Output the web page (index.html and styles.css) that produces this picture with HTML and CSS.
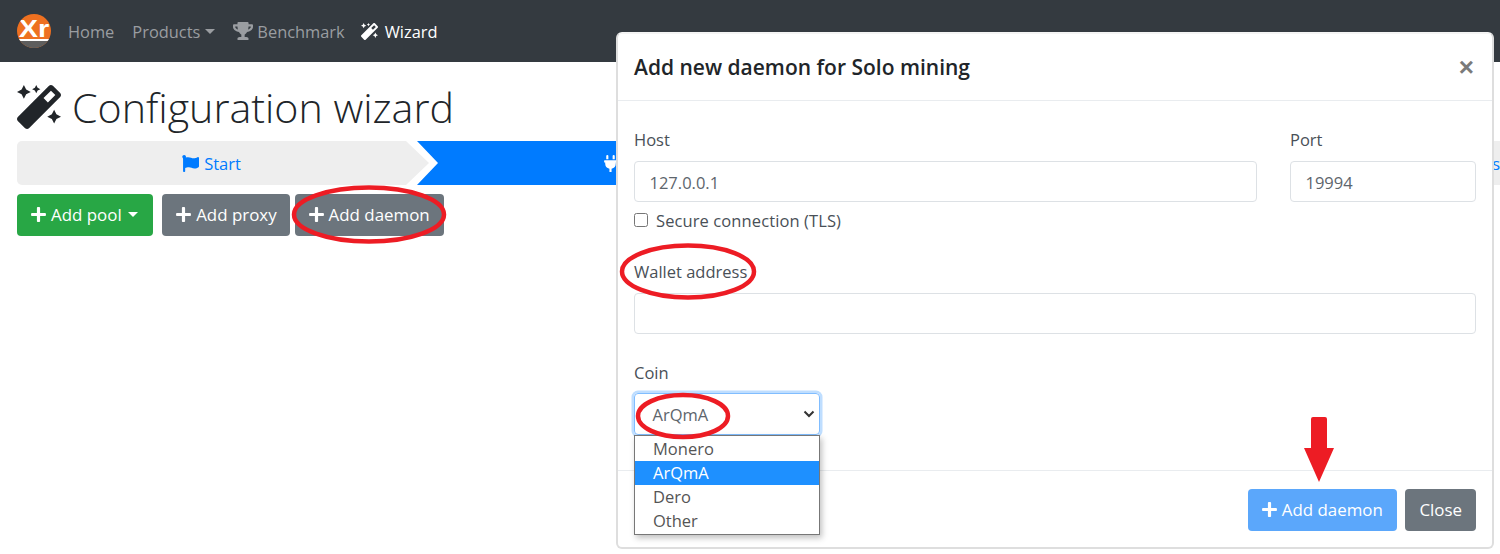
FILE: index.html
```html
<!DOCTYPE html>
<html lang="en">
<head>
<meta charset="utf-8">
<title>Configuration wizard</title>
<link rel="stylesheet" href="styles.css">
</head>
<body>
<svg class="defs" width="0" height="0" aria-hidden="true">
  <symbol id="i-wand" viewBox="0 0 512 512"><path d="M224 96l16-32 32-16-32-16-16-32-16 32-32 16 32 16 16 32zM80 160l26.66-53.33L160 80l-53.34-26.67L80 0 53.34 53.33 0 80l53.34 26.67L80 160zm352 128l-26.66 53.33L352 368l53.34 26.67L432 448l26.66-53.33L512 368l-53.34-26.67L432 288zm70.62-193.77L417.77 9.38C411.53 3.12 403.34 0 395.15 0c-8.19 0-16.38 3.12-22.63 9.38L9.38 372.52c-12.5 12.5-12.5 32.76 0 45.25l84.85 84.85c6.25 6.25 14.44 9.37 22.62 9.37 8.19 0 16.38-3.12 22.63-9.37l363.14-363.15c12.5-12.49 12.5-32.75 0-45.24zM359.45 203.46l-50.91-50.91 86.6-86.6 50.91 50.91-86.6 86.6z"/></symbol>
  <symbol id="i-plus" viewBox="0 0 448 512"><path d="M416 208H272V64c0-17.67-14.33-32-32-32h-32c-17.67 0-32 14.33-32 32v144H32c-17.67 0-32 14.33-32 32v32c0 17.67 14.33 32 32 32h144v144c0 17.67 14.33 32 32 32h32c17.67 0 32-14.33 32-32V304h144c17.67 0 32-14.33 32-32v-32c0-17.67-14.33-32-32-32z"/></symbol>
</svg>
<div class="page">
  <nav class="navbar">
    <span class="logo"><span class="logo-band"></span><span class="logo-text">Xr</span></span>
    <a class="nav-link">Home</a>
    <a class="nav-link">Products<span class="caret"></span></a>
    <a class="nav-link"><svg class="nav-icon trophy" viewBox="0 0 576 512"><path d="M552 64H448V24c0-13.3-10.7-24-24-24H152c-13.3 0-24 10.7-24 24v40H24C10.7 64 0 74.7 0 88v56c0 35.7 22.5 72.4 61.9 100.7 31.5 22.7 69.8 37.1 110 41.7C203.3 338.5 240 360 240 360v72h-48c-35.3 0-64 20.7-64 56v12c0 6.6 5.4 12 12 12h296c6.6 0 12-5.4 12-12v-12c0-35.3-28.7-56-64-56h-48v-72s36.7-21.5 68.1-73.6c40.3-4.6 78.6-19 110-41.7 39.3-28.3 61.9-65 61.9-100.7V88c0-13.3-10.7-24-24-24zM99.3 192.8C74.9 175.2 64 155.6 64 144v-16h64.2c1 32.6 5.8 61.2 12.8 86.2-15.1-5.2-29.2-12.4-41.7-21.4zM512 144c0 16.1-17.7 36.1-35.3 48.8-12.5 9-26.7 16.2-41.8 21.4 7-25 11.8-53.6 12.8-86.2H512v16z"/></svg>Benchmark</a>
    <a class="nav-link active"><svg class="nav-icon wand-sm"><use href="#i-wand"/></svg>Wizard</a>
  </nav>
  <main class="content">
    <h1 class="title"><svg class="title-icon"><use href="#i-wand"/></svg>Configuration wizard</h1>
    <div class="steps">
      <div class="step step-first"><svg class="step-icon" viewBox="0 0 512 512"><path d="M349.565 98.783C295.978 98.783 251.721 64 184.348 64c-24.955 0-47.309 4.384-68.045 12.013a55.947 55.947 0 0 0 3.586-23.562C118.117 24.015 94.806 1.206 66.338.048 34.345-1.254 8 24.296 8 56c0 19.026 9.497 35.825 24 45.945V488c0 13.255 10.745 24 24 24h16c13.255 0 24-10.745 24-24v-94.4c28.311-12.064 63.582-22.122 114.435-22.122 53.588 0 97.844 34.783 165.217 34.783 48.169 0 86.667-16.294 122.505-40.858C506.84 359.452 512 349.571 512 339.045v-243.1c0-23.393-24.269-38.87-45.485-29.016-34.338 15.948-76.454 31.854-116.95 31.854z"/></svg>Start</div>
      <div class="step step-active"><svg class="step-icon" viewBox="0 0 384 512"><path d="M320,32a32,32,0,0,0-64,0v96h64Zm48,128H16A16,16,0,0,0,0,176v32a16,16,0,0,0,16,16H32v32A160.07,160.07,0,0,0,160,412.8V512h64V412.8A160.07,160.07,0,0,0,352,256V224h16a16,16,0,0,0,16-16V176A16,16,0,0,0,368,160ZM128,32a32,32,0,0,0-64,0v96h64Z"/></svg>Connection</div>
      <div class="step step-last">Pools</div>
    </div>
    <div class="actions">
      <button class="btn btn-green"><svg class="plus"><use href="#i-plus"/></svg>Add pool<span class="caret"></span></button>
      <button class="btn btn-gray btn-proxy"><svg class="plus"><use href="#i-plus"/></svg>Add proxy</button>
      <button class="btn btn-gray"><svg class="plus"><use href="#i-plus"/></svg>Add daemon</button>
    </div>
  </main>

  <section class="modal">
    <header class="modal-header">
      <h2 class="modal-title">Add new daemon for Solo mining</h2>
      <span class="modal-close">×</span>
    </header>
    <div class="modal-body">
      <div class="host-row">
        <div class="field">
          <label class="label">Host</label>
          <input class="input" value="127.0.0.1">
        </div>
        <div class="field">
          <label class="label">Port</label>
          <input class="input" value="19994">
        </div>
      </div>
      <label class="check-row"><input type="checkbox" class="check">Secure connection (TLS)</label>
      <div class="field wallet">
        <label class="label">Wallet address</label>
        <input class="input">
      </div>
      <div class="field coin">
        <label class="label">Coin</label>
        <div class="select">ArQmA<svg class="chevron" viewBox="0 0 12 8"><path d="M1.5 1.5 6 6l4.5-4.5" fill="none" stroke="#333" stroke-width="2"/></svg></div>
      </div>
    </div>
    <footer class="modal-footer">
      <button class="btn btn-blue"><svg class="plus"><use href="#i-plus"/></svg>Add daemon</button>
      <button class="btn btn-gray">Close</button>
    </footer>
    <ul class="dropdown">
      <li class="opt">Monero</li>
      <li class="opt opt-on">ArQmA</li>
      <li class="opt">Dero</li>
      <li class="opt">Other</li>
    </ul>
  </section>

  <svg class="marks" viewBox="0 0 1500 554" aria-hidden="true">
    <ellipse cx="369" cy="214.500" rx="75" ry="27" />
    <ellipse cx="688" cy="271.500" rx="66" ry="26" />
    <ellipse cx="683" cy="416" rx="45" ry="21" />
    <path class="arrow" d="M1313 417h12q2 0 2 2v29h7l-15 34-15-34h7v-29q0-2 2-2z"/>
  </svg>
</div>
</body>
</html>
```
FILE: styles.css
```css
* { box-sizing: border-box; }
html, body { margin: 0; padding: 0; }
body {
  font-family: "Open Sans", "Noto Sans", sans-serif;
  font-size: 16.5px;
  color: #495057;
  background: #fff;
}
.defs { position: absolute; }
.page {
  position: relative;
  width: 1500px;
  height: 554px;
  overflow: hidden;
}
.navbar {
  height: 62px;
  background: #343a40;
  display: flex;
  align-items: center;
  padding-left: 17px;
  gap: 18px;
  font-size: 16.400px;
}
.logo {
  position: relative;
  width: 34px;
  height: 34px;
  margin-right: -1px;
  border-radius: 50%;
  background: #ee7020;
  overflow: hidden;
  flex: none;
}
.logo-band {
  position: absolute;
  left: 0; right: 0; bottom: 0;
  height: 9px;
  background: #5e5e5e;
  border-top: 2px solid #fff;
}
.logo-text {
  position: absolute;
  left: 0; right: 0;
  top: 1px;
  text-align: center;
  font-family: "Liberation Sans", sans-serif;
  font-weight: 700;
  font-size: 24px;
  line-height: 28px;
  transform: scaleX(1.2);
  color: #fff;
}
.nav-link {
  display: flex;
  align-items: center;
  color: #9a9da1;
  white-space: nowrap;
}
.nav-link.active { color: #fff; margin-left: -2px; }
.nav-icon { fill: currentColor; flex: none; margin-right: 4px; }
.trophy { width: 20px; height: 18px; }
.wand-sm { width: 17px; height: 17px; margin-right: 7px; }
.caret {
  display: inline-block;
  margin-left: 5px;
  border-top: 5px solid currentColor;
  border-left: 5px solid transparent;
  border-right: 5px solid transparent;
}
.content { padding: 0 0 0 17px; }
.title {
  margin: 19px 0 8px;
  height: 52px;
  display: flex;
  align-items: center;
  font-weight: 300;
  font-size: 41.200px;
  color: #212529;
  white-space: nowrap;
}
.title-icon { width: 44px; height: 44px; fill: #212529; margin-right: 11px; flex: none; }
.steps {
  display: flex;
  height: 44px;
  width: 1483px;
}
.step {
  display: flex;
  align-items: center;
  justify-content: center;
  height: 44px;
  white-space: nowrap;
}
.step-icon { width: 17px; height: 17px; fill: currentColor; margin-right: 5px; flex: none; }
.step-first {
  width: 412px;
  padding-right: 23px;
  background: #eee;
  color: #007bff;
  border-radius: 5px 0 0 5px;
  clip-path: polygon(0 0, 389px 0, 100% 50%, 389px 100%, 0 100%);
}
.step-active {
  width: 480px;
  margin-left: -12px;
  background: #007bff;
  color: #fff;
  clip-path: polygon(0 0, 100% 0, 100% 100%, 0 100%, 21px 50%);
}
.step-last {
  flex: 1;
  background: #eee;
  color: #007bff;
  justify-content: flex-end;
}
.actions { display: flex; margin-top: 9px; }
.btn {
  display: inline-flex;
  align-items: center;
  height: 41.500px;
  padding: 0 14px;
  border: 0;
  border-radius: 4px;
  font: inherit;
  font-size: 16.900px;
  color: #fff;
  white-space: nowrap;
}
.btn-green { background: #28a745; margin-right: 9px; padding-right: 15.500px; }
.btn-green .caret { margin-left: 6px; }
.btn-gray { background: #6c757d; }
.btn-proxy { margin-right: 5px; padding-right: 13px; }
.btn-blue { background: #5ba7fb; margin-right: 8px; padding-right: 14.500px; }
.plus { width: 15px; height: 17px; fill: #fff; margin-right: 5px; flex: none; }
.modal {
  position: absolute;
  left: 616px;
  top: 32px;
  width: 878px;
  height: 517px;
  background: #fff;
  border: 2px solid #dedede;
  border-top-color: #f4f4f4;
  border-radius: 6px;
  display: flex;
  flex-direction: column;
}
.modal-header {
  height: 67px;
  flex: none;
  padding: 0 18px 0 16px;
  display: flex;
  align-items: center;
  justify-content: space-between;
  border-bottom: 1.500px solid #e9ecef;
}
.modal-title {
  margin: 0;
  font-size: 21px;
  font-weight: 600;
  color: #212529;
}
.modal-close {
  font-size: 26px;
  font-weight: 700;
  color: #7a7a7a;
  line-height: 1;
  font-family: "Liberation Sans", sans-serif;
}
.modal-body {
  flex: 1;
  padding: 27px 0 0 16px;
}
.host-row {
  display: grid;
  grid-template-columns: 623px 186px;
  gap: 33px;
}
.field { display: flex; flex-direction: column; }
.label { height: 24px; line-height: 24px; margin-bottom: 9px; }
.input {
  height: 41px;
  border: 1.500px solid #dde1e5;
  border-radius: 4px;
  padding: 1px 14.500px 0;
  font: inherit;
  color: #5d656c;
  background: #fff;
  outline: 0;
  width: 100%;
}
.check-row {
  display: flex;
  align-items: center;
  height: 24px;
  margin-top: 6px;
  letter-spacing: .1px;
}
.check { margin: 0 8px 0 0; width: 14px; height: 14px; }
.wallet { margin-top: 28px; width: 842px; }
.coin { margin-top: 27px; width: 186px; }
.coin .label { margin-bottom: 8px; }
.select {
  position: relative;
  height: 42px;
  line-height: 42px;
  border: 1.500px solid #80bdff;
  border-radius: 4px;
  box-shadow: 0 0 0 2.500px #bfdeff;
  padding-left: 17.500px;
  color: #5d656c;
}
.chevron { position: absolute; right: 4px; top: 16px; width: 12px; height: 8px; }
.modal-footer {
  flex: none;
  height: 77px;
  border-top: 1.500px solid #e9ecef;
  display: flex;
  justify-content: flex-end;
  align-items: flex-start;
  padding: 18px 16px 0 0;
}
.dropdown {
  position: absolute;
  left: 16px;
  top: 401px;
  width: 186px;
  margin: 0;
  padding: 1px 0;
  list-style: none;
  background: #fff;
  border: 1.500px solid #777;
  box-shadow: 2px 3px 6px rgba(0, 0, 0, .25);
}
.opt {
  height: 24px;
  line-height: 24px;
  padding-left: 18px;
  color: #555;
}
.opt-on { background: #1e90ff; color: #fff; }
.marks {
  position: absolute;
  left: 0; top: 0;
  width: 1500px;
  height: 554px;
  pointer-events: none;
}
.marks ellipse { fill: none; stroke: #ed1c24; stroke-width: 4.500; }
.arrow { fill: #ed1c24; }
```
